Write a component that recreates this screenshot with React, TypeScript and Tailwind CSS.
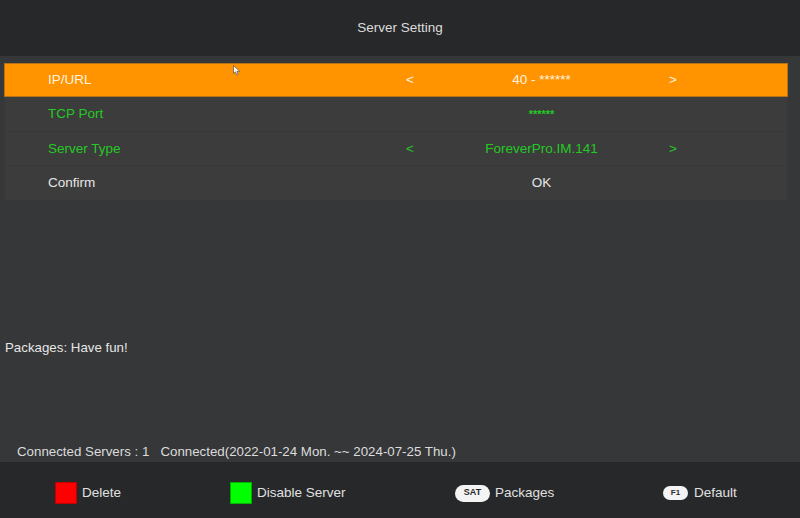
import React from 'react'

const font = { fontFamily: '"Liberation Sans", Arial, sans-serif' }

type Row = {
  label: string
  value: string
  arrows?: boolean
  tone: 'active' | 'green' | 'white'
  small?: boolean
}

const rows: Row[] = [
  { label: 'IP/URL', value: '40 - ******', arrows: true, tone: 'active' },
  { label: 'TCP Port', value: '******', tone: 'green', small: true },
  { label: 'Server Type', value: 'ForeverPro.IM.141', arrows: true, tone: 'green' },
  { label: 'Confirm', value: 'OK', tone: 'white' },
]

const Cursor = () => (
  <svg width="8" height="11" viewBox="0 0 8 11" className="absolute left-[233px] top-[65px]">
    <path d="M0.5 0.5 L0.5 8.5 L2.5 6.8 L4 10 L5.3 9.4 L3.9 6.3 L6.6 6.3 Z" fill="#ffffff" stroke="#555" strokeWidth="0.7" />
  </svg>
)

const App = () => {
  return (
    <div className="relative w-[800px] h-[518px] bg-[#363739] flex flex-col text-[13.5px]" style={font}>
      <div className="h-[56px] bg-[#27282a] flex items-center justify-center text-[#dcdcdc] text-[13.5px]">
        Server Setting
      </div>

      <div className="flex-1 flex flex-col px-[5px] pt-[7px]">
        <div className="w-[782px] bg-[#3c3c3c] flex flex-col">
          {rows.map((row) => {
            const color =
              row.tone === 'active'
                ? 'text-[#fff3e0]'
                : row.tone === 'green'
                  ? 'text-[#24c924]'
                  : 'text-[#e6e6e6]'
            return (
              <div
                key={row.label}
                className={`flex items-center ${
                  row.tone === 'active'
                    ? 'h-[34px] bg-[#ff9400] border border-[#b5701a] -ml-px w-[784px]'
                    : 'h-[34.5px] pt-[1px] border-b border-[#383838]'
                } ${color}`}
              >
                <div className="w-[401px] pl-[43px]">{row.label}</div>
                <div className="w-[271px] grid grid-cols-[12px_1fr_12px] items-center">
                  <span>{row.arrows ? '<' : ''}</span>
                  <span className={`text-center ${row.small ? 'text-[11px] font-bold' : ''}`}>{row.value}</span>
                  <span className="text-right">{row.arrows ? '>' : ''}</span>
                </div>
              </div>
            )
          })}
        </div>

        <div className="mt-[139px] h-[16px] leading-[16px] text-[13.3px] text-[#e6e6e6]">Packages: Have fun!</div>

        <div className="mt-[88px] h-[16px] leading-[16px] pl-[12px] text-[13.3px] text-[#dcdcdc] whitespace-pre">
          {'Connected Servers : 1   Connected(2022-01-24 Mon. ~~ 2024-07-25 Thu.)'}
        </div>
      </div>

      <div className="h-[56px] bg-[#27282a] flex items-center pl-[55px] pt-[6px] text-[#e0e0e0]">
        <div className="w-[175px] flex items-center gap-[5px]">
          <span className="w-[22px] h-[22px] bg-[#ff0000] border border-[#c00000]" />
          <span>Delete</span>
        </div>
        <div className="w-[225px] flex items-center gap-[5px]">
          <span className="w-[22px] h-[22px] bg-[#00ff00] border border-[#00b000]" />
          <span>Disable Server</span>
        </div>
        <div className="w-[208px] flex items-center gap-[5px]">
          <span className="w-[35px] h-[17px] rounded-full bg-[#f4f4f4] text-[#2a2a2a] text-[9px] font-bold flex items-center justify-center">
            SAT
          </span>
          <span>Packages</span>
        </div>
        <div className="flex items-center gap-[6px]">
          <span className="w-[25px] h-[14px] rounded-full bg-[#f4f4f4] text-[#2a2a2a] text-[8px] font-bold flex items-center justify-center">
            F1
          </span>
          <span>Default</span>
        </div>
      </div>

      <Cursor />
    </div>
  )
}

export default App
